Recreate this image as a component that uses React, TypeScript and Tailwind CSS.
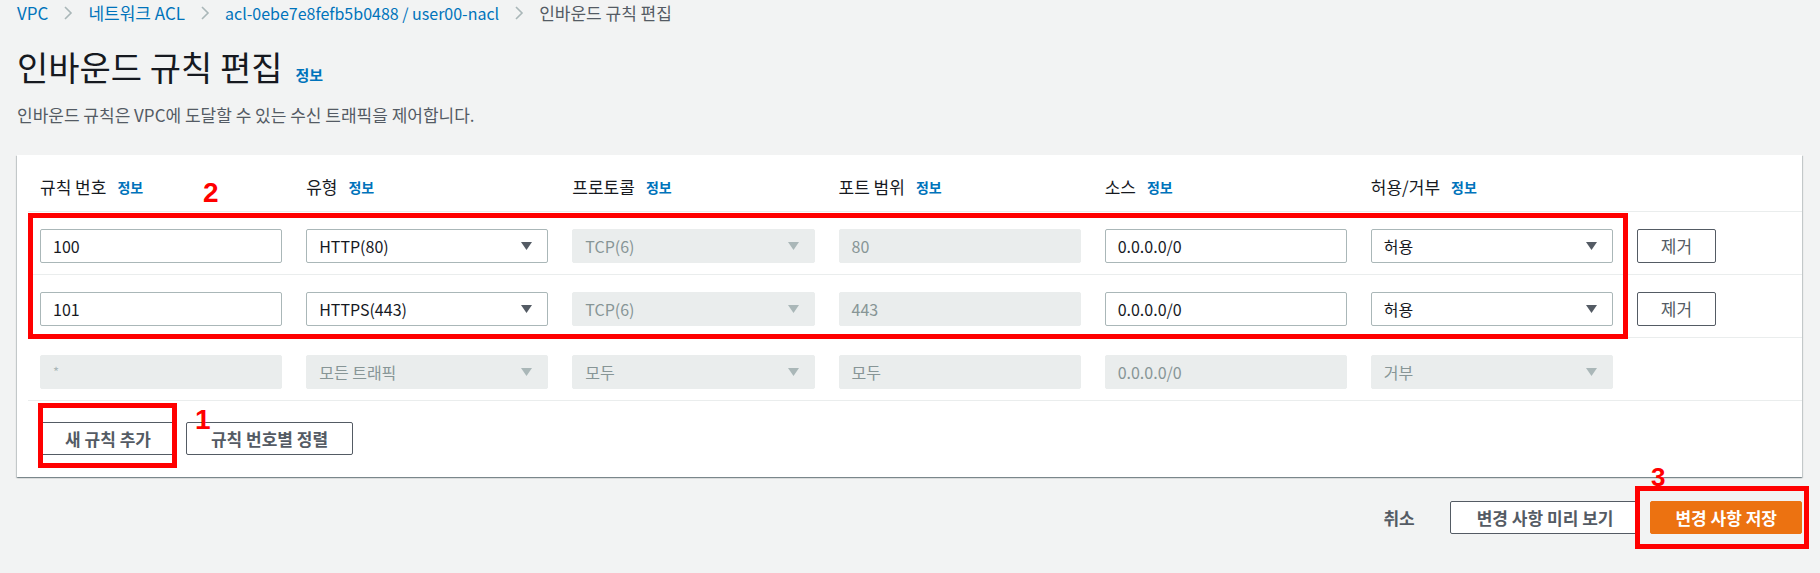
import React from 'react';

type Cell = { value: string; kind: 'input' | 'select'; disabled?: boolean; faint?: boolean };

const headers = ['규칙 번호', '유형', '프로토콜', '포트 범위', '소스', '허용/거부'];

const rules: { cells: Cell[]; removable: boolean }[] = [
  {
    removable: true,
    cells: [
      { value: '100', kind: 'input' },
      { value: 'HTTP(80)', kind: 'select' },
      { value: 'TCP(6)', kind: 'select', disabled: true },
      { value: '80', kind: 'input', disabled: true },
      { value: '0.0.0.0/0', kind: 'input' },
      { value: '허용', kind: 'select' },
    ],
  },
  {
    removable: true,
    cells: [
      { value: '101', kind: 'input' },
      { value: 'HTTPS(443)', kind: 'select' },
      { value: 'TCP(6)', kind: 'select', disabled: true },
      { value: '443', kind: 'input', disabled: true },
      { value: '0.0.0.0/0', kind: 'input' },
      { value: '허용', kind: 'select' },
    ],
  },
  {
    removable: false,
    cells: [
      { value: '*', kind: 'input', disabled: true, faint: true },
      { value: '모든 트래픽', kind: 'select', disabled: true },
      { value: '모두', kind: 'select', disabled: true },
      { value: '모두', kind: 'input', disabled: true },
      { value: '0.0.0.0/0', kind: 'input', disabled: true },
      { value: '거부', kind: 'select', disabled: true },
    ],
  },
];

const Chevron = () => (
  <svg width="10" height="16" viewBox="0 0 10 16">
    <polyline points="2,2 8,8 2,14" fill="none" stroke="#aab7b8" strokeWidth="1.6" />
  </svg>
);

const Caret = ({ disabled }: { disabled?: boolean }) => (
  <svg width="11" height="8" viewBox="0 0 11 8">
    <polygon points="0,0 11,0 5.5,8" fill={disabled ? '#aab7b8' : '#545b64'} />
  </svg>
);

const Field = ({ cell }: { cell: Cell }) => (
  <div
    className={
      cell.disabled
        ? 'flex h-[34px] items-center justify-between rounded-[2px] border border-[#eaeded] bg-[#eaeded] pl-3 pr-[15px] text-[16px] text-[#879596]'
        : 'flex h-[34px] items-center justify-between rounded-[2px] border border-[#aab7b8] bg-white pl-3 pr-[15px] text-[16px] text-[#16191f]'
    }
  >
    <span className={cell.faint ? 'text-[13px] text-[#aab7b8]' : ''}>{cell.value}</span>
    {cell.kind === 'select' && <Caret disabled={cell.disabled} />}
  </div>
);

const gridCols = 'grid w-[1676px] grid-cols-[repeat(6,minmax(0,1fr))_79px] gap-x-[24px]';

export default function App() {
  return (
    <div className="relative min-h-[573px] bg-[#f2f3f3] pl-[17px] pr-[18px] font-['Noto_Sans_CJK_KR','Noto_Sans',sans-serif] text-[17px] text-[#16191f]">
      {/* breadcrumb */}
      <nav className="flex h-[26px] items-center gap-[15px] leading-[20px]">
        <a className="text-[#0073bb]">VPC</a>
        <Chevron />
        <a className="text-[#0073bb]">네트워크 ACL</a>
        <Chevron />
        <a className="text-[16px] text-[#0073bb]">acl-0ebe7e8fefb5b0488 / user00-nacl</a>
        <Chevron />
        <span className="text-[#545b64]">인바운드 규칙 편집</span>
      </nav>

      <div className="mt-[21px] flex h-[40px] items-baseline">
        <h1 className="text-[34px] leading-[40px] font-normal">인바운드 규칙 편집</h1>
        <a className="ml-[13px] text-[15px] font-bold text-[#0073bb]">정보</a>
      </div>
      <p className="mt-[17px] leading-[22px] text-[#545b64]">
        인바운드 규칙은 VPC에 도달할 수 있는 수신 트래픽을 제어합니다.
      </p>

      {/* rules card */}
      <div className="mt-[29px] bg-white pl-[11px] shadow-[0_1px_1px_0_rgba(0,28,36,0.3),1px_1px_1px_0_rgba(0,28,36,0.15),-1px_1px_1px_0_rgba(0,28,36,0.15)]">
        <div className="pb-[14px] pl-[12px] pt-[22px]">
          <div className={gridCols}>
            {headers.map((h) => (
              <div key={h} className="flex items-center gap-[11px] leading-[20px]">
                <span>{h}</span>
                <a className="text-[14px] font-bold text-[#0073bb]">정보</a>
              </div>
            ))}
          </div>
        </div>

        {rules.map((rule, i) => (
          <div key={i} className="border-t border-[#eaeded] pb-[11px] pl-[12px] pt-[17px]">
            <div className={gridCols}>
              {rule.cells.map((c, j) => (
                <Field key={j} cell={c} />
              ))}
              {rule.removable && (
                <button className="h-[34px] rounded-[2px] border border-[#545b64] bg-white text-[#545b64]">
                  제거
                </button>
              )}
            </div>
          </div>
        ))}

        <div className="flex gap-[10px] border-t border-[#eaeded] pb-[22px] pl-[12px] pt-[21px]">
          <button className="h-[33px] rounded-[2px] border border-[#545b64] bg-white px-[24px] font-bold text-[#545b64]">
            새 규칙 추가
          </button>
          <button className="h-[33px] rounded-[2px] border border-[#545b64] bg-white px-[24px] font-bold text-[#545b64]">
            규칙 번호별 정렬
          </button>
        </div>
      </div>

      {/* footer actions */}
      <div className="mt-[24px] flex items-center justify-end">
        <span className="mr-[35px] font-bold text-[#545b64]">취소</span>
        <button className="mr-[10px] h-[33px] rounded-[2px] border border-[#545b64] bg-white px-[26px] font-bold text-[#545b64]">
          변경 사항 미리 보기
        </button>
        <button className="h-[33px] rounded-[2px] border border-[#ec7211] bg-[#ec7211] px-[24px] font-bold text-white">
          변경 사항 저장
        </button>
      </div>

      {/* annotation overlays */}
      <div className="pointer-events-none absolute left-[28px] top-[213px] h-[126px] w-[1600px] border-[5px] border-[#ff0000]" />
      <div className="pointer-events-none absolute left-[38px] top-[403px] h-[65px] w-[139px] border-[5px] border-[#ff0000]" />
      <div className="pointer-events-none absolute left-[1635px] top-[486px] h-[63px] w-[174px] border-[5px] border-[#ff0000]" />
      <span className="absolute left-[203px] top-[179px] font-['Liberation_Sans',sans-serif] text-[28px] font-bold leading-none text-[#ff0000]">2</span>
      <span className="absolute left-[195px] top-[406px] font-['Liberation_Sans',sans-serif] text-[28px] font-bold leading-none text-[#ff0000]">1</span>
      <span className="absolute left-[1651px] top-[464px] font-['Liberation_Sans',sans-serif] text-[26px] font-bold leading-none text-[#ff0000]">3</span>
    </div>
  );
}
